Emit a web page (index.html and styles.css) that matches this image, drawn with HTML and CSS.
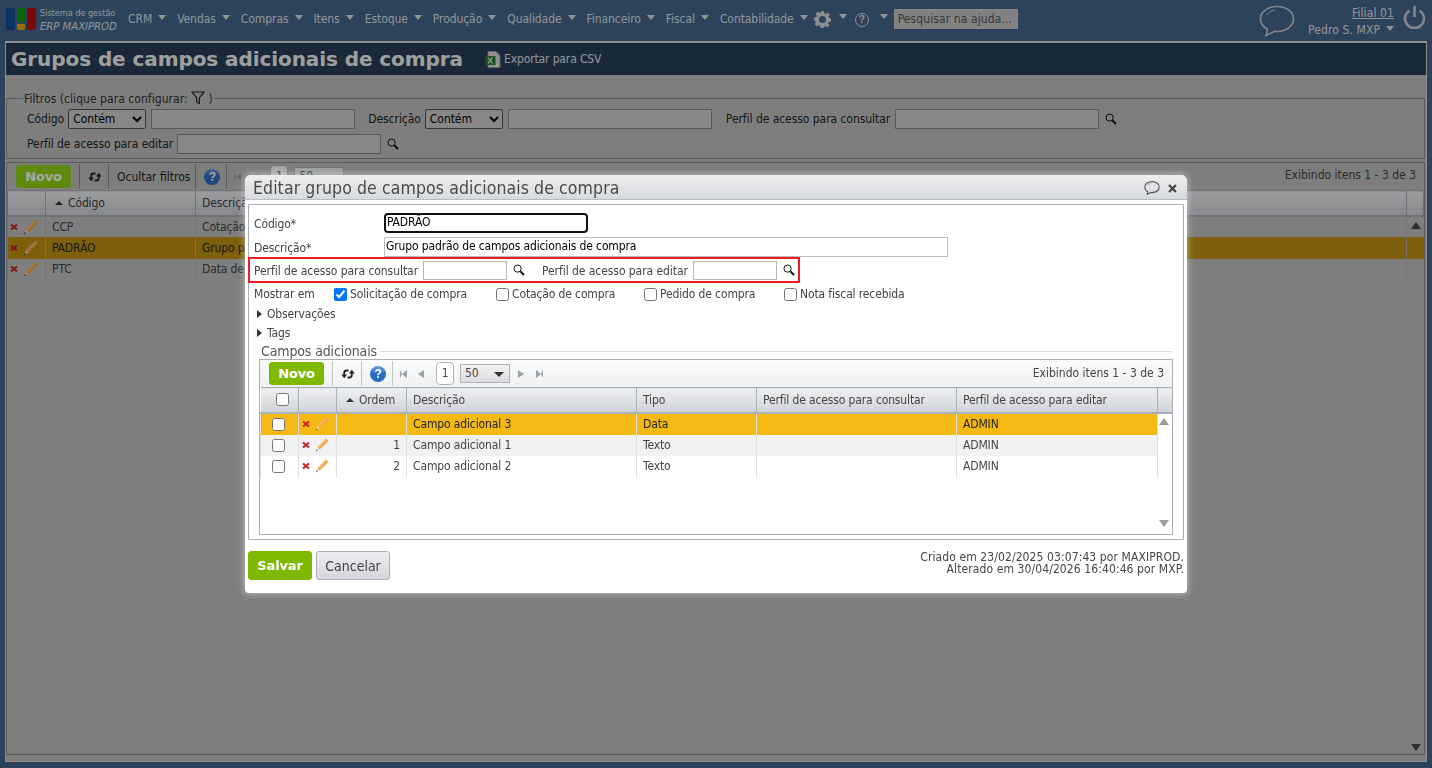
FILE: index.html
```html
<!DOCTYPE html>
<html lang="pt-BR">
<head>
    <meta charset="UTF-8">
    <title>Grupos de campos adicionais de compra</title>
    <link rel="stylesheet" href="styles.css">
</head>
<body>
    <svg class="sprite" xmlns="http://www.w3.org/2000/svg">
        <symbol id="i-search" viewBox="0 0 12 12"><circle cx="4.6" cy="4.6" r="3.6" fill="none" stroke="currentColor" stroke-width="1"/><path d="M7.4 7.4L11 11" stroke="currentColor" stroke-width="2"/></symbol>
        <symbol id="i-del" viewBox="0 0 8 8"><path d="M1 1.500L7 6.500M7 1.500L1 6.500" stroke="#c3242a" stroke-width="2.200"/></symbol>
        <symbol id="i-edit" viewBox="0 0 14 14"><path d="M11 .6L13.400 3 4.600 11.600 2.200 9.400z" fill="#f0a040"/><path d="M11 .6L12.200 1.800 3.400 10.500 2.200 9.400z" fill="#f6bd72"/><path d="M2.200 9.400L4.600 11.600 1.400 12.600z" fill="#f7e0bc"/><path d="M1.800 11.400L2.800 12.300 .6 13.400z" fill="#333"/></symbol>
        <symbol id="i-sync" viewBox="0 0 14 12"><path d="M7.500 2.500H5.500C4 2.500 3.200 3.500 3.200 5V7" fill="none" stroke="#222" stroke-width="1.800"/><path d="M.3 6.500H6.100L3.200 10.300z" fill="#222"/><path d="M6.500 9.500H8.500C10 9.500 10.800 8.500 10.800 7V5" fill="none" stroke="#222" stroke-width="1.800"/><path d="M7.900 5.500H13.700L10.800 1.700z" fill="#222"/></symbol>
        <symbol id="i-bubble" viewBox="0 0 36 32"><path d="M18 1.500C8.600 1.500 1.500 7 1.500 14c0 4.300 2.700 8 7 10.300L7 30.500l8.500-4.100c.8.100 1.700.100 2.500.100 9.400 0 16.500-5.500 16.500-12.500S27.400 1.500 18 1.500z" fill="none" stroke="currentColor"/><path d="M8 10c2-3 5-4.500 8-5" fill="none" stroke="currentColor" stroke-width="1"/></symbol>
    </svg>

    <header class="topbar">
        <div class="logo">
            <span class="logo-bar logo-blue"></span>
            <span class="logo-mid"><i></i><b></b></span>
            <span class="logo-bar logo-red"></span>
        </div>
        <div class="brand">
            <span>Sistema de gestão</span>
            <em>ERP MAXIPROD</em>
        </div>
        <nav class="menu">
            <a class="caret">CRM</a>
            <a class="caret">Vendas</a>
            <a class="caret">Compras</a>
            <a class="caret">Itens</a>
            <a class="caret">Estoque</a>
            <a class="caret">Produção</a>
            <a class="caret">Qualidade</a>
            <a class="caret">Financeiro</a>
            <a class="caret">Fiscal</a>
            <a class="caret">Contabilidade</a>
        </nav>
        <a class="caret menu-icon">
            <svg width="17" height="17" viewBox="0 0 17 17"><path d="M7 0h3l.4 2.300 1.500.6 1.900-1.300 2.100 2.100-1.300 1.900.6 1.500L17 7.500v3l-2.300.4-.6 1.500 1.300 1.900-2.100 2.100-1.900-1.300-1.500.6L9.500 17h-3l-.4-2.300-1.500-.6-1.900 1.300L.6 13.300l1.300-1.900-.6-1.500L0 9.500v-3l2.300-.4.6-1.500L1.600 2.700 3.700.6l1.900 1.300 1.500-.6z" fill="#dcdcdc" fill-rule="evenodd"/><circle cx="8.500" cy="8.500" r="3.500" fill="#46678e"/></svg>
        </a>
        <a class="caret menu-icon"><span class="top-help">?</span></a>
        <input class="help-search" type="text" placeholder="Pesquisar na ajuda...">
        <div class="topbar-right">
            <svg class="chat" width="36" height="32"><use href="#i-bubble"/></svg>
            <div class="user">
                <a>Filial 01</a>
                <span class="caret">Pedro S. MXP</span>
            </div>
            <svg class="power" width="23" height="24" viewBox="0 0 23 24"><path d="M6.500 5.500a9.500 9.500 0 1 0 10 0" fill="none" stroke="#c9ced4" stroke-width="2.600"/><path d="M11.500 1v11" stroke="#c9ced4" stroke-width="2.600"/></svg>
        </div>
    </header>

    <main class="page">
        <div class="page-title">
            <h1>Grupos de campos adicionais de compra</h1>
            <a class="export">
                <svg width="16" height="17" viewBox="0 0 16 17"><path d="M3 .5h8l4 4v12H3z" fill="#ddd" stroke="#999"/><rect x=".5" y="5" width="10" height="9" fill="#2e7d3a"/><path d="M3 6.500l4.500 6M7.500 6.500l-4.500 6" stroke="#dfe" stroke-width="1.200"/><path d="M12 12.500v2l-1 1.500" fill="none" stroke="#fff" stroke-width="1.400"/></svg>
                Exportar para CSV
            </a>
        </div>

        <fieldset class="filters">
            <legend>Filtros (clique para configurar:
                <svg width="14" height="14" viewBox="0 0 14 14"><path d="M1 1h12L8.300 7v5.500L5.700 11V7z" fill="none" stroke="#222" stroke-width="1.200"/></svg>
                )</legend>
            <div class="filter-row">
                <label class="f-cod">Código</label>
                <select class="f-select"><option>Contém</option></select>
                <input class="f-input" type="text">
                <label class="f-desc">Descrição</label>
                <select class="f-select"><option>Contém</option></select>
                <input class="f-input" type="text">
                <label class="f-perfil">Perfil de acesso para consultar</label>
                <input class="f-input" type="text">
                <svg class="mag" width="12" height="12"><use href="#i-search"/></svg>
            </div>
            <div class="filter-row">
                <label class="f-cod">Perfil de acesso para editar</label>
                <input class="f-input" type="text">
                <svg class="mag" width="12" height="12"><use href="#i-search"/></svg>
            </div>
        </fieldset>

        <section class="grid main-grid">
            <div class="toolbar">
                <button class="btn-new">Novo</button>
                <span class="tool"><svg width="14" height="12"><use href="#i-sync"/></svg></span>
                <span class="tool tool-text">Ocultar filtros</span>
                <span class="tool"><span class="help-ico">?</span></span>
                <span class="pager">
                    <i class="pg pg-first"></i><i class="pg pg-prev"></i>
                    <b class="pg-num">1</b>
                    <b class="pg-size">50</b>
                </span>
                <span class="count">Exibindo itens 1 - 3 de 3</span>
            </div>
            <table class="rows main-rows">
                <colgroup><col class="c-act"><col class="c-code"><col class="c-rest"><col class="c-fill"></colgroup>
                <thead>
                    <tr><th></th><th><span class="sort">Código</span></th><th>Descrição</th><th></th></tr>
                </thead>
                <tbody>
                    <tr><td class="acts"><svg width="8" height="8"><use href="#i-del"/></svg><svg width="14" height="14"><use href="#i-edit"/></svg></td><td>CCP</td><td>Cotação</td><td></td></tr>
                    <tr class="sel"><td class="acts"><svg width="8" height="8"><use href="#i-del"/></svg><svg width="14" height="14"><use href="#i-edit"/></svg></td><td>PADRÃO</td><td>Grupo padrão</td><td></td></tr>
                    <tr><td class="acts"><svg width="8" height="8"><use href="#i-del"/></svg><svg width="14" height="14"><use href="#i-edit"/></svg></td><td>PTC</td><td>Data de</td><td></td></tr>
                </tbody>
            </table>
            <i class="arrow-up main-up"></i>
            <i class="arrow-down main-down"></i>
        </section>
    </main>

    <div class="overlay"></div>

    <div class="modal">
        <div class="modal-head">
            <h2>Editar grupo de campos adicionais de compra</h2>
            <svg class="modal-chat" width="16" height="14" viewBox="0 0 36 32"><use href="#i-bubble"/></svg>
            <svg class="modal-close" width="9" height="9" viewBox="0 0 9 9"><path d="M1 1l7 7M8 1l-7 7" stroke="#444" stroke-width="2.200"/></svg>
        </div>
        <div class="modal-body">
            <div class="form-row row-code">
                <label>Código*</label>
                <input class="in-code" type="text" value="PADRÃO">
            </div>
            <div class="form-row row-desc">
                <label>Descrição*</label>
                <input class="in-desc" type="text" value="Grupo padrão de campos adicionais de compra">
            </div>
            <div class="perfil-box">
                <label>Perfil de acesso para consultar</label>
                <input class="in-perfil" type="text">
                <svg class="mag" width="12" height="12"><use href="#i-search"/></svg>
                <label class="second">Perfil de acesso para editar</label>
                <input class="in-perfil" type="text">
                <svg class="mag" width="12" height="12"><use href="#i-search"/></svg>
            </div>
            <div class="show-row">
                <span class="show-label">Mostrar em</span>
                <label class="chk chk-1"><input type="checkbox" checked>Solicitação de compra</label>
                <label class="chk chk-2"><input type="checkbox">Cotação de compra</label>
                <label class="chk chk-3"><input type="checkbox">Pedido de compra</label>
                <label class="chk"><input type="checkbox">Nota fiscal recebida</label>
            </div>
            <div class="expander">Observações</div>
            <div class="expander">Tags</div>
            <div class="section-title"><span>Campos adicionais</span></div>

            <section class="grid sub-grid">
                <div class="toolbar">
                    <button class="btn-new">Novo</button>
                    <span class="tool"><svg width="14" height="12"><use href="#i-sync"/></svg></span>
                    <span class="tool"><span class="help-ico">?</span></span>
                    <span class="pager">
                        <i class="pg pg-first"></i><i class="pg pg-prev"></i>
                        <b class="pg-num">1</b>
                        <b class="pg-size">50</b>
                        <i class="pg pg-next"></i><i class="pg pg-last"></i>
                    </span>
                    <span class="count">Exibindo itens 1 - 3 de 3</span>
                </div>
                <table class="rows sub-rows">
                    <colgroup><col class="s-chk"><col class="s-act"><col class="s-ord"><col class="s-desc"><col class="s-tipo"><col class="s-cons"><col class="s-edit"><col class="s-fill"></colgroup>
                    <thead>
                        <tr>
                            <th class="mid"><input type="checkbox"></th>
                            <th></th>
                            <th><span class="sort">Ordem</span></th>
                            <th>Descrição</th>
                            <th>Tipo</th>
                            <th>Perfil de acesso para consultar</th>
                            <th>Perfil de acesso para editar</th>
                            <th></th>
                        </tr>
                    </thead>
                    <tbody>
                        <tr class="sel">
                            <td class="mid"><input type="checkbox"></td>
                            <td class="acts"><svg width="8" height="8"><use href="#i-del"/></svg><svg width="14" height="14"><use href="#i-edit"/></svg></td>
                            <td class="num"></td><td>Campo adicional 3</td><td>Data</td><td></td><td>ADMIN</td><td class="scroll"></td>
                        </tr>
                        <tr class="alt">
                            <td class="mid"><input type="checkbox"></td>
                            <td class="acts"><svg width="8" height="8"><use href="#i-del"/></svg><svg width="14" height="14"><use href="#i-edit"/></svg></td>
                            <td class="num">1</td><td>Campo adicional 1</td><td>Texto</td><td></td><td>ADMIN</td><td class="scroll"></td>
                        </tr>
                        <tr>
                            <td class="mid"><input type="checkbox"></td>
                            <td class="acts"><svg width="8" height="8"><use href="#i-del"/></svg><svg width="14" height="14"><use href="#i-edit"/></svg></td>
                            <td class="num">2</td><td>Campo adicional 2</td><td>Texto</td><td></td><td>ADMIN</td><td class="scroll"></td>
                        </tr>
                    </tbody>
                </table>
                <i class="arrow-up sub-up"></i>
                <i class="arrow-down sub-down"></i>
            </section>
        </div>
        <div class="modal-foot">
            <button class="btn-save">Salvar</button>
            <button class="btn-cancel">Cancelar</button>
            <p class="audit">Criado em 23/02/2025 03:07:43 por MAXIPROD.<br>Alterado em 30/04/2026 16:40:46 por MXP.</p>
        </div>
    </div>
</body>
</html>
```

FILE: styles.css
```css
* {
    box-sizing: border-box;
}

html, body {
    height: 768px;
    overflow: hidden;
}

body {
    margin: 0;
    background-color: #46678e;
    font-family: "DejaVu Sans Condensed", "DejaVu Sans", sans-serif;
    font-size: 12px;
    letter-spacing: -.13px;
    color: #222;
}

input, select, button {
    letter-spacing: inherit;
}

label {
    white-space: nowrap;
}

.sprite {
    position: absolute;
    width: 0;
    height: 0;
}

/* top bar */
.topbar {
    display: flex;
    align-items: flex-start;
    height: 41px;
    padding: 8px 6px 0;
    color: #dfe3e8;
}

.logo {
    display: flex;
    gap: 2px;
    width: 30px;
}

.logo-bar {
    width: 9px;
    height: 22px;
    border-radius: 2px;
}

.logo-blue {
    background-color: #0f4f94;
}

.logo-red {
    background-color: #c00d0d;
}

.logo-mid {
    display: flex;
    flex-direction: column;
    gap: 2px;
    width: 8px;
}

.logo-mid i {
    height: 14px;
    background-color: #129a14;
    border-radius: 2px 2px 0 0;
}

.logo-mid b {
    height: 6px;
    background-color: #f0a814;
    border-radius: 0 0 2px 2px;
}

.brand {
    display: flex;
    flex-direction: column;
    width: 88px;
    margin-left: 4px;
    margin-top: -1px;
    font-size: 9px;
    line-height: 12px;
    letter-spacing: 0;
}

.brand em {
    font-size: 11.2px;
    line-height: 15px;
}

.menu {
    display: flex;
    gap: 11px;
    margin-top: 4px;
    letter-spacing: -.07px;
}

.caret::after {
    content: "";
    display: inline-block;
    margin-left: 6px;
    vertical-align: 3px;
    border-left: 4px solid transparent;
    border-right: 4px solid transparent;
    border-top: 5px solid #dfe3e8;
}

.menu-icon {
    display: flex;
    margin-left: 6px;
    margin-top: 3px;
}

.menu-icon::after {
    align-self: flex-start;
    margin-top: 3px;
    margin-left: 8px;
}

.menu-icon + .menu-icon {
    margin-left: 8px;
    margin-top: 5px;
}

.menu-icon + .menu-icon::after {
    margin-top: 1px;
    margin-left: 11px;
}

.top-help {
    width: 14px;
    height: 14px;
    border: 1px solid #dcdcdc;
    border-radius: 50%;
    font-family: "Liberation Sans", sans-serif;
    font-size: 10px;
    font-weight: 700;
    line-height: 12px;
    text-align: center;
    color: #dcdcdc;
}

.help-search {
    width: 124px;
    height: 20px;
    margin-left: 6px;
    margin-top: 1px;
    padding: 0 3px;
    border: 1px solid #ccc;
    background-color: #c8c8c8;
    font: inherit;
    letter-spacing: .1px;
}

.help-search::placeholder {
    color: #555;
}

.topbar-right {
    display: flex;
    margin-left: auto;
}

.chat {
    margin-right: 13px;
    color: #c9ced4;
    margin-top: -3px;
    stroke-width: 1.6;
}

.user {
    display: flex;
    flex-direction: column;
    align-items: flex-end;
    line-height: 15px;
    padding-top: 1px;
    letter-spacing: .1px;
}

.user a {
    text-decoration: underline;
    margin-top: -3px;
    margin-bottom: 2px;
}

.power {
    margin-left: 9px;
    margin-top: -3px;
}

/* page behind the modal */
.page {
    margin: 0 5px;
    height: 721px;
    border: 1px solid #d8d8d8;
    border-top-width: 2px;
    background-color: #c2c2c2;
    padding-bottom: 6px;
    display: flex;
    flex-direction: column;
}

.page-title {
    display: flex;
    align-items: center;
    height: 32px;
    padding-left: 5px;
    background-color: #284059;
    color: #f4f4f4;
}

.page-title h1 {
    margin: 0;
    font-family: "DejaVu Sans", sans-serif;
    font-size: 20px;
    font-weight: 700;
    letter-spacing: -.08px;
}

.export {
    display: flex;
    align-items: center;
    gap: 3px;
    margin-left: 22px;
    color: #dfe3e8;
}

.filters {
    height: 68px;
    margin: 16px 1px 3px 0;
    padding: 3px 0 0 20px;
    border: 1px solid #8e8e8e;
    min-inline-size: auto;
    letter-spacing: -.05px;
}

.filters legend {
    margin-left: -4px;
    padding: 0 1px;
    color: #333;
    line-height: 14px;
    letter-spacing: .05px;
}

.filters legend svg {
    vertical-align: -2px;
}

.filter-row {
    display: flex;
    align-items: center;
    height: 20px;
    margin-bottom: 5px;
}

.f-select {
    width: 78px;
    height: 20px;
    margin: 0 5px 0 4px;
    background-color: #d0d0d0;
    border: 1px solid #555;
    border-radius: 2px;
    font: inherit;
}

.f-input {
    width: 204px;
    height: 20px;
    background-color: #cfcfcf;
    border: 1px solid #8a8a8a;
}

.f-cod + .f-input {
    margin-left: 4px;
}

.f-desc {
    margin-left: 13px;
}

.f-perfil {
    margin: 0 5px 0 14px;
}

.mag {
    color: #111;
    flex: none;
    margin-left: 6px;
}

/* grids */
.grid {
    position: relative;
    border: 1px solid #8e8e8e;
}

.main-grid {
    flex: 1;
    margin-right: 1px;
}

.toolbar {
    display: flex;
    align-items: center;
    height: 27px;
    padding-left: 9px;
    background-image: linear-gradient(#fafbfb, #eff0f1);
}

.main-grid .toolbar {
    background-image: none;
}

.btn-new {
    width: 55px;
    height: 23px;
    margin-right: 8px;
    border: 1px solid #7cb400;
    border-radius: 3px;
    background-color: #7fb800;
    color: #fff;
    font-family: "DejaVu Sans", sans-serif;
    font-size: 13px;
    font-weight: 700;
}

.main-grid .btn-new {
    background-color: #92d418;
    border-color: #92d418;
}

.tool {
    display: flex;
    align-items: center;
    justify-content: center;
    height: 25px;
    padding: 0 6px 0 8px;
    border-left: 1px solid #c0c4c8;
}

.tool-text {
    padding: 0 5px 0 8px;
    letter-spacing: 0;
}

.help-ico {
    width: 16px;
    height: 16px;
    border-radius: 50%;
    background-image: linear-gradient(#6d9be0, #2c6cc0 50%);
    font-family: "Liberation Sans", sans-serif;
    font-size: 12px;
    font-weight: 700;
    line-height: 16px;
    text-align: center;
    color: #fff;
}

.pager {
    display: flex;
    align-items: center;
    height: 25px;
    padding-left: 7px;
    border-left: 1px solid #c0c4c8;
}

.main-grid .tool,
.main-grid .pager {
    border-left-color: #8e8e8e;
}

.pg {
    width: 0;
    height: 0;
    border-top: 4.5px solid transparent;
    border-bottom: 4.5px solid transparent;
}

.pg-first {
    border-left: 2px solid #9aa0a6;
    border-right: 5px solid #9aa0a6;
    margin-right: 11px;
}

.pg-prev {
    border-right: 6px solid #9aa0a6;
    margin-right: 12px;
}

.pg-next {
    border-left: 6px solid #9aa0a6;
    margin-left: 8px;
    margin-right: 12px;
}

.pg-last {
    border-left: 5px solid #9aa0a6;
    border-right: 2px solid #9aa0a6;
}

.pg-num {
    width: 18px;
    height: 23px;
    border: 1px solid #b0b4b8;
    border-radius: 4px;
    background-color: #fff;
    font-weight: 400;
    text-align: center;
    line-height: 21px;
    color: #444;
}

.pg-size {
    position: relative;
    width: 50px;
    height: 19px;
    margin-left: 6px;
    padding-left: 4px;
    border: 1px solid #b0b4b8;
    background-image: linear-gradient(#f2f3f4, #d9dbde);
    font-weight: 400;
    line-height: 16px;
    color: #444;
}

.pg-size::after {
    content: "";
    position: absolute;
    right: 5px;
    top: 7px;
    border-left: 5px solid transparent;
    border-right: 5px solid transparent;
    border-top: 5px solid #333;
}

.count {
    margin-left: auto;
    padding-right: 8px;
    margin-top: -2px;
    color: #444;
    letter-spacing: 0;
}

.main-grid .count {
    margin-top: -4px;
}

.rows {
    width: 100%;
    table-layout: fixed;
    border-collapse: collapse;
}

.rows th {
    height: 25px;
    padding: 0 6px;
    border: 1px solid #a9b0b8;
    border-bottom-width: 2px;
    background-image: linear-gradient(#eff0f2, #cfd2d6);
    font-weight: 400;
    text-align: left;
    color: #444;
}

.rows td {
    height: 21px;
    padding: 0 6px;
    border-left: 1px solid #dcdee0;
    color: #444;
}

.rows tr.sel td {
    background-color: #f5b913;
    color: #222;
}

.main-rows tr.sel td {
    height: 22px;
    background-color: #c29413;
}

.rows tr.alt td {
    background-color: #f0f1f3;
}

.rows td.scroll {
    background-color: #fff !important;
}

.rows input {
    display: block;
    margin: 0 auto;
}

.sub-rows td input {
    margin-left: 11px;
}

.mid {
    padding: 0 !important;
}

.sort::before {
    content: "";
    display: inline-block;
    margin-right: 5px;
    vertical-align: 2px;
    border-left: 4px solid transparent;
    border-right: 4px solid transparent;
    border-bottom: 4px solid #333;
}

.acts {
    padding: 0 0 0 3px !important;
}

.acts svg {
    vertical-align: middle;
}

.acts svg + svg {
    margin-left: 5px;
}

/* main grid columns */
.c-act {
    width: 38px;
}

.c-code {
    width: 150px;
}

.c-fill {
    width: 17px;
}

.main-rows td {
    border-left-color: #b4b4b4;
}

.main-rows .acts {
    padding-left: 2px !important;
}

.main-rows .acts svg + svg {
    width: 16px;
    height: 16px;
}

.main-rows .sort {
    margin-left: 3px;
}

.arrow-up,
.arrow-down {
    position: absolute;
    border-left: 5px solid transparent;
    border-right: 5px solid transparent;
}

.arrow-up {
    border-bottom: 7px solid #9a9ea2;
}

.arrow-down {
    border-top: 7px solid #9a9ea2;
}

.main-up {
    right: 3px;
    top: 59px;
    border-bottom-color: #444;
}

.main-down {
    right: 3px;
    bottom: 3px;
    border-top-color: #444;
}

/* modal */
.overlay {
    position: fixed;
    top: 0;
    left: 0;
    width: 100%;
    height: 100%;
    background-color: rgba(0,0,0,0.35);
}

.modal {
    position: absolute;
    left: 245px;
    top: 175px;
    width: 942px;
    height: 418px;
    background-color: #fff;
    border-radius: 6px 6px 4px 4px;
    box-shadow: 0 0 6px 1px rgba(255,255,255,0.45);
}

.modal-head {
    display: flex;
    align-items: center;
    height: 25px;
    padding: 2px 10px 0 8px;
    border-radius: 6px 6px 0 0;
    border-bottom: 1px solid #b4bcc4;
    background-image: linear-gradient(#eceef0, #d8dadd);
    color: #555;
}

.modal-head h2 {
    margin: 0;
    font-size: 17.5px;
    font-weight: 400;
    letter-spacing: .1px;
    color: #4a4a4a;
    flex: 1;
}

.modal-chat {
    color: #555;
    margin-right: 8px;
    stroke-width: 2.6;
}

.modal-body {
    height: 336px;
    margin: 4px 3px 0;
    padding: 0 11px 0 5px;
    border: 1px solid #a9b0b8;
    background-color: #fff;
    color: #444;
}

.form-row {
    display: flex;
    align-items: center;
    height: 24px;
}

.row-code {
    margin-top: 6px;
}

.form-row label {
    width: 130px;
    padding-top: 2px;
}

.in-code {
    width: 204px;
    height: 20px;
    padding: 0 1px 2px;
    border: 2px solid #111;
    border-radius: 4px;
    outline: none;
    font: inherit;
}

.in-desc {
    width: 564px;
    height: 20px;
    padding: 0 1px 2px;
    border: 1px solid #bbb;
    font: inherit;
}

.perfil-box {
    display: flex;
    align-items: center;
    width: 552px;
    height: 26px;
    margin: -2px 0 0 -6px;
    padding-left: 4px;
    border: 2px solid #ee1c25;
    letter-spacing: -.06px;
}

.perfil-box label {
    padding-top: 2px;
}

.in-perfil {
    width: 84px;
    height: 19px;
    margin-left: 5px;
    border: 1px solid #b4b8bc;
}

.second {
    margin-left: 17px;
}

.show-row {
    display: flex;
    align-items: center;
    height: 22px;
    color: #444;
}

.show-label {
    width: 80px;
}

.chk {
    display: flex;
    align-items: center;
}

.chk input {
    margin: 0 3px 0 0;
}

.chk-1 {
    width: 162px;
}

.chk-2 {
    width: 148px;
}

.chk-3 {
    width: 140px;
}

.expander {
    height: 19px;
    line-height: 19px;
    padding-left: 13px;
    position: relative;
}

.expander::before {
    content: "";
    position: absolute;
    left: 3px;
    top: 5px;
    border-top: 4px solid transparent;
    border-bottom: 4px solid transparent;
    border-left: 5px solid #333;
}

.section-title {
    display: flex;
    align-items: center;
    height: 16px;
    margin: 0 0 0 7px;
    font-size: 14px;
    color: #555;
}

.section-title::after {
    content: "";
    flex: 1;
    height: 1px;
    margin-left: 3px;
    background-color: #d8dadc;
}

.sub-grid {
    width: 914px;
    height: 176px;
    margin: 0 0 0 5px;
    border-color: #a9b0b8;
}

.s-chk {
    width: 38px;
}

.s-act {
    width: 38px;
}

.s-ord {
    width: 70px;
}

.s-desc {
    width: 230px;
}

.s-tipo {
    width: 120px;
}

.s-cons {
    width: 200px;
}

.s-edit {
    width: 201px;
}

.sub-rows th:first-child {
    border-left: 0;
}

.sub-rows th:first-child input {
    margin-left: 15px;
}

.sub-rows th:last-child {
    border-right: 0;
}

.sub-rows th:nth-child(3) {
    padding-left: 9px;
}

.sub-rows tr.sel td {
    height: 22px;
}

.sub-up {
    right: 3px;
    top: 58px;
}

.sub-down {
    right: 3px;
    bottom: 7px;
}

.num {
    text-align: right;
}

.modal-foot {
    display: flex;
    align-items: flex-start;
    margin-top: 11px;
    padding: 0 3px;
}

.btn-save {
    width: 64px;
    height: 29px;
    border: 1px solid #7cb400;
    border-radius: 3px;
    background-color: #7fb800;
    color: #fff;
    font-family: "DejaVu Sans", sans-serif;
    font-size: 13px;
    font-weight: 700;
}

.btn-cancel {
    width: 74px;
    height: 29px;
    margin-left: 4px;
    border: 1px solid #a9b0b8;
    border-radius: 3px;
    background-image: linear-gradient(#eceef0, #d4d6da);
    color: #444;
    font: inherit;
    font-size: 14px;
    letter-spacing: 0;
}

.audit {
    margin: 0 0 0 auto;
    line-height: 12px;
    text-align: right;
    color: #444;
    letter-spacing: .1px;
}
```
